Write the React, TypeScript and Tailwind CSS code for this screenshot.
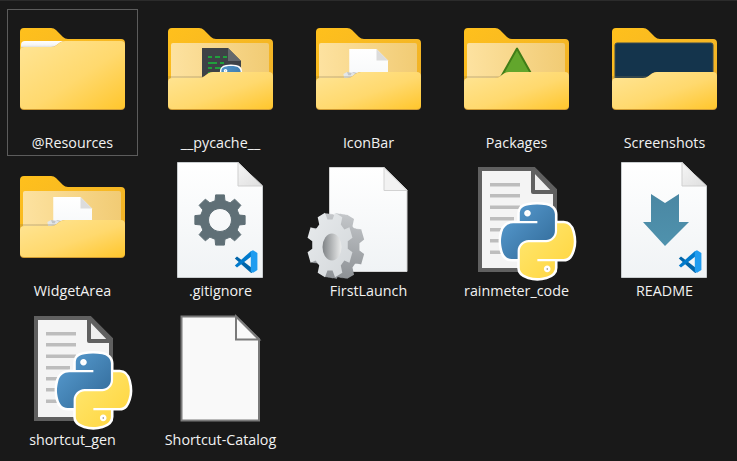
import type { ReactNode } from "react";

const PY_BLUE =
  "M54.919 0.001c-4.584.022-8.961.413-12.813 1.095C30.76 3.099 28.7 7.295 28.7 15.032v10.219h26.813v3.406H18.638c-7.793 0-14.616 4.684-16.75 13.594-2.462 10.213-2.571 16.586 0 27.25 1.906 7.938 6.457 13.594 14.25 13.594h9.219v-12.25c0-8.85 7.657-16.656 16.75-16.656h26.781c7.454 0 13.406-6.138 13.406-13.625V15.032c0-7.266-6.13-12.725-13.406-13.937C64.282.328 59.502-.02 54.919.001zM40.419 8.219c2.77 0 5.031 2.299 5.031 5.125 0 2.816-2.262 5.094-5.031 5.094-2.78 0-5.031-2.277-5.031-5.094 0-2.826 2.252-5.125 5.031-5.125z";
const PY_YELLOW =
  "M85.638 28.657v11.906c0 9.231-7.826 17-16.75 17H42.106c-7.336 0-13.406 6.279-13.406 13.625v25.531c0 7.266 6.319 11.54 13.406 13.625 8.487 2.496 16.626 2.947 26.781 0 6.75-1.954 13.406-5.888 13.406-13.625V86.501H55.513v-3.406h40.188c7.793 0 10.696-5.436 13.406-13.594 2.799-8.399 2.68-16.476 0-27.25-1.926-7.757-5.604-13.594-13.406-13.594zM70.575 93.313c2.78 0 5.031 2.277 5.031 5.094 0 2.826-2.252 5.125-5.031 5.125-2.77 0-5.031-2.299-5.031-5.125 0-2.816 2.262-5.094 5.031-5.094z";

// trapezoid-toothed gear, rx/ry so the same thing works squashed for the 3d one
function gearPath(cx: number, cy: number, rx: number, ry: number, root: number, turn = 0) {
  const teeth = 8;
  const pts: string[] = [];
  const step = (Math.PI * 2) / teeth;
  for (let i = 0; i < teeth; i++) {
    const a = i * step - Math.PI / 2 + turn;
    const offs: [number, number][] = [
      [-0.32, root],
      [-0.22, 1],
      [0.22, 1],
      [0.32, root],
    ];
    for (const [o, r] of offs) {
      const t = a + o * step;
      pts.push(`${(cx + Math.cos(t) * rx * r).toFixed(2)} ${(cy + Math.sin(t) * ry * r).toFixed(2)}`);
    }
  }
  return "M" + pts.join("L") + "Z";
}

function Defs() {
  return (
    <svg className="absolute h-0 w-0">
      <defs>
        <linearGradient id="tab" x1="0" y1="0" x2="1" y2="1">
          <stop offset="0" stopColor="#ffc01c" />
          <stop offset="1" stopColor="#eeb02a" />
        </linearGradient>
        <linearGradient id="paper" x1="0" y1="0" x2="1" y2="0">
          <stop offset="0" stopColor="#fde2a0" />
          <stop offset="1" stopColor="#f1cb74" />
        </linearGradient>
        <linearGradient id="front" x1="0" y1="0" x2="1" y2="1">
          <stop offset="0" stopColor="#ffe596" />
          <stop offset="0.55" stopColor="#ffd96e" />
          <stop offset="1" stopColor="#ffc62c" />
        </linearGradient>
        <linearGradient id="strip" x1="0" y1="0" x2="0" y2="1">
          <stop offset="0" stopColor="#ffffff" />
          <stop offset="0.6" stopColor="#f4f4f4" />
          <stop offset="1" stopColor="#d2d2d2" />
        </linearGradient>
        <linearGradient id="doc" x1="0" y1="0" x2="0" y2="1">
          <stop offset="0" stopColor="#ffffff" />
          <stop offset="1" stopColor="#f0f3f5" />
        </linearGradient>
        <linearGradient id="fold" x1="0" y1="0" x2="1" y2="1">
          <stop offset="0" stopColor="#f6f6f6" />
          <stop offset="1" stopColor="#dedede" />
        </linearGradient>
        <linearGradient id="pyb" x1="0" y1="0" x2="1" y2="1">
          <stop offset="0" stopColor="#5a9fd4" />
          <stop offset="1" stopColor="#2f6795" />
        </linearGradient>
        <linearGradient id="pyy" x1="0" y1="0" x2="1" y2="1">
          <stop offset="0" stopColor="#ffe873" />
          <stop offset="1" stopColor="#ffd43b" />
        </linearGradient>
        <linearGradient id="arrow" x1="0" y1="0" x2="0" y2="1">
          <stop offset="0" stopColor="#4a87a3" />
          <stop offset="1" stopColor="#4f92ad" />
        </linearGradient>
        <linearGradient id="side" x1="0" y1="0" x2="0" y2="1">
          <stop offset="0" stopColor="#c4c7ca" />
          <stop offset="1" stopColor="#8e9296" />
        </linearGradient>
        <linearGradient id="face" x1="0" y1="0" x2="1" y2="1">
          <stop offset="0" stopColor="#e8ebed" />
          <stop offset="1" stopColor="#d3d7da" />
        </linearGradient>
        <linearGradient id="hole" x1="0" y1="0" x2="1" y2="0">
          <stop offset="0" stopColor="#7f8386" />
          <stop offset="1" stopColor="#eceded" />
        </linearGradient>
      </defs>
    </svg>
  );
}

function frontPath(l: number, r: number, bottom: number) {
  return `M13 ${l + 4}Q13 ${l} 17 ${l}H44Q47 ${l} 49 ${l - 1.5}L53 ${r + 1.5}Q55 ${r} 58 ${r}H114Q118 ${r} 118 ${r + 4}V${bottom - 4}Q118 ${bottom} 114 ${bottom}H17Q13 ${bottom} 13 ${bottom - 4}Z`;
}

function FolderBack() {
  return (
    <path
      d="M13 23Q13 19 17 19H44Q47 19 49 21L56 28Q58 30 61 30H114Q118 30 118 34V90H13Z"
      fill="url(#tab)"
    />
  );
}

function FolderFront({ l, r }: { l: number; r: number }) {
  return (
    <>
      <path d={frontPath(l, r, 101)} fill="#cf9a33" />
      <path d={frontPath(l, r, 100)} fill="url(#front)" />
    </>
  );
}

function OpenFolder({ children }: { children?: ReactNode }) {
  return (
    <>
      <FolderBack />
      <rect x="16" y="34" width="98" height="40" rx="2" fill="url(#paper)" />
      {children}
      <rect x="13" y="67" width="40" height="3" fill="#8a7a50" opacity="0.25" />
      <FolderFront l={69} r={63} />
    </>
  );
}

function PythonLogo({ x, y, s }: { x: number; y: number; s: number }) {
  return (
    <g transform={`translate(${x} ${y}) scale(${s})`}>
      <path d={PY_BLUE} fill="#fff" stroke="#fff" strokeWidth="8" strokeLinejoin="round" />
      <path d={PY_YELLOW} fill="#fff" stroke="#fff" strokeWidth="8" strokeLinejoin="round" />
      <path d={PY_BLUE} fill="url(#pyb)" fillRule="evenodd" />
      <path d={PY_YELLOW} fill="url(#pyy)" fillRule="evenodd" />
    </g>
  );
}

function VsCode() {
  return (
    <g transform="translate(79 93)">
      <path d="M0.8 8.4L3 6.4L18 18V23L16.5 22.6Z" fill="#0065a9" />
      <path d="M0.8 15.6L3 17.6L18 6V1L16.5 1.4Z" fill="#007acc" />
      <path d="M16.8 1.2L19 0.2L23.4 3V20L19 22.8L16.8 21.8Z" fill="#1f9cf0" />
    </g>
  );
}

function ModernDoc() {
  return (
    <>
      <path d="M22.5 5.5H83L107.5 29V120.5H22.5Z" fill="url(#doc)" stroke="#c9cdcf" />
      <path d="M83 5.5V29H107.5Z" fill="url(#fold)" stroke="#cfcfcf" />
    </>
  );
}

function PlainDoc({ stroke, sw, fill, fold }: { stroke: string; sw: number; fill: string; fold: string }) {
  return (
    <>
      <path d="M26.5 10.5H81L104 33V114.5H26.5Z" fill={fill} stroke={stroke} strokeWidth={sw} />
      <path d="M81 10.5V33.5H104Z" fill={fold} stroke={stroke} strokeWidth={sw} />
    </>
  );
}

function Gear3D() {
  const body = gearPath(27, 88, 23, 33, 0.78, Math.PI / 8);
  return (
    <>
      {[18, 16, 14, 12, 10, 8, 6, 4, 2].map((d) => (
        <path key={d} d={body} fill="url(#side)" transform={`translate(${d * 0.65} ${d * 0.1})`} />
      ))}
      <path d={body} fill="url(#face)" />
      <ellipse cx="29" cy="90" rx="9.5" ry="13.5" fill="url(#hole)" />
    </>
  );
}

function TextDoc({ x, y }: { x: number; y: number }) {
  const lines = [0, 11, 22.5, 34, 45, 56, 67.5];
  return (
    <g transform={`translate(${x} ${y})`}>
      <path d="M2 2H56L77 23V103H2Z" fill="#f4f4f4" stroke="#606060" strokeWidth="4" />
      <path d="M55 2V25H77Z" fill="#efefef" stroke="#606060" strokeWidth="4" strokeLinejoin="round" />
      {lines.map((ly, i) => (
        <rect key={i} x="12" y={16 + ly} width={i < 3 ? 30 : 24} height="3.5" fill="#bdbdbd" />
      ))}
    </g>
  );
}

const icons: Record<string, ReactNode> = {
  closed: (
    <>
      <FolderBack />
      <path d="M14 36Q14 32 18 32H58L52 39H14Z" fill="url(#strip)" />
      <FolderFront l={38} r={32} />
    </>
  ),
  pycache: (
    <OpenFolder>
      <path d="M47 39H73L86 52V80H47Z" fill="#3e4246" />
      <path d="M73 39V52H86Z" fill="#63686c" />
      <g fill="#20a03c">
        <rect x="53" y="47" width="4" height="2" />
        <rect x="60" y="47" width="5" height="2" />
        <rect x="68" y="47" width="4" height="2" />
        <rect x="53" y="53" width="9" height="2" />
        <rect x="65" y="53" width="4" height="2" />
        <rect x="53" y="58" width="4" height="2" />
        <rect x="60" y="58" width="6" height="2" />
        <rect x="53" y="63" width="5" height="2" />
      </g>
      <PythonLogo x={56} y={57} s={0.36} />
    </OpenFolder>
  ),
  mini: (
    <OpenFolder>
      <g transform="translate(33 35) scale(0.5)">
        <path d="M26.5 10H81L104 33V115H26.5Z" fill="url(#doc)" />
        <path d="M81 10V33H104Z" fill="#dcdcdc" />
        <Gear3D />
      </g>
    </OpenFolder>
  ),
  packages: (
    <OpenFolder>
      <path d="M66 39.5L50 68H82Z" fill="#62a62c" stroke="#3f7d17" strokeWidth="2" strokeLinejoin="round" />
    </OpenFolder>
  ),
  screenshots: (
    <OpenFolder>
      <rect x="16" y="34" width="98" height="40" rx="2" fill="#14344c" stroke="#3b4a50" />
    </OpenFolder>
  ),
  gitignore: (
    <>
      <ModernDoc />
      <path
        fillRule="evenodd"
        d={gearPath(65, 63, 25.5, 25.5, 0.78) + "M65 51.5a11.5 11.5 0 1 0 0.01 0Z"}
        fill="#5f6f76"
        stroke="#5f6f76"
        strokeWidth="1"
        strokeLinejoin="round"
      />
      <VsCode />
    </>
  ),
  first: (
    <>
      <PlainDoc stroke="#d2d2d2" sw={1} fill="url(#doc)" fold="#f2f2f2" />
      <Gear3D />
    </>
  ),
  python: (
    <>
      <TextDoc x={27} y={10} />
      <PythonLogo x={50} y={47.5} s={0.655} />
    </>
  ),
  readme: (
    <>
      <ModernDoc />
      <path d="M52 37L66 46L80 37V65H90L66 89L44 65H52Z" fill="url(#arrow)" />
      <VsCode />
    </>
  ),
  blank: <PlainDoc stroke="#7a7a7a" sw={2} fill="#f9f9f9" fold="#f9f9f9" />,
};

const files = [
  { name: "@Resources", icon: "closed", selected: true },
  { name: "__pycache__", icon: "pycache" },
  { name: "IconBar", icon: "mini" },
  { name: "Packages", icon: "packages" },
  { name: "Screenshots", icon: "screenshots" },
  { name: "WidgetArea", icon: "mini" },
  { name: ".gitignore", icon: "gitignore" },
  { name: "FirstLaunch", icon: "first" },
  { name: "rainmeter_code", icon: "python" },
  { name: "README", icon: "readme" },
  { name: "shortcut_gen", icon: "python" },
  { name: "Shortcut-Catalog", icon: "blank" },
];

export default function App() {
  return (
    <div className="h-[461px] w-[737px] overflow-hidden border-t border-[#2b2b2b] bg-[#191919] pt-[8px] pl-[7px] font-['Open_Sans',sans-serif] text-[#f2f2f2]">
      <Defs />
      <div className="grid grid-cols-[repeat(5,131px)] grid-rows-[148px_149px_148px] gap-x-[17px]">
        {files.map((f) => (
          <div
            key={f.name}
            className={
              f.selected
                ? "flex h-[147px] flex-col items-center ring-1 ring-inset ring-[#5c5c5c]"
                : "flex h-[147px] flex-col items-center"
            }
          >
            <svg width="131" height="124" viewBox="0 0 131 124" className="overflow-visible">
              {icons[f.icon]}
            </svg>
            <span className="whitespace-nowrap text-[14.3px] leading-5">{f.name}</span>
          </div>
        ))}
      </div>
    </div>
  );
}
